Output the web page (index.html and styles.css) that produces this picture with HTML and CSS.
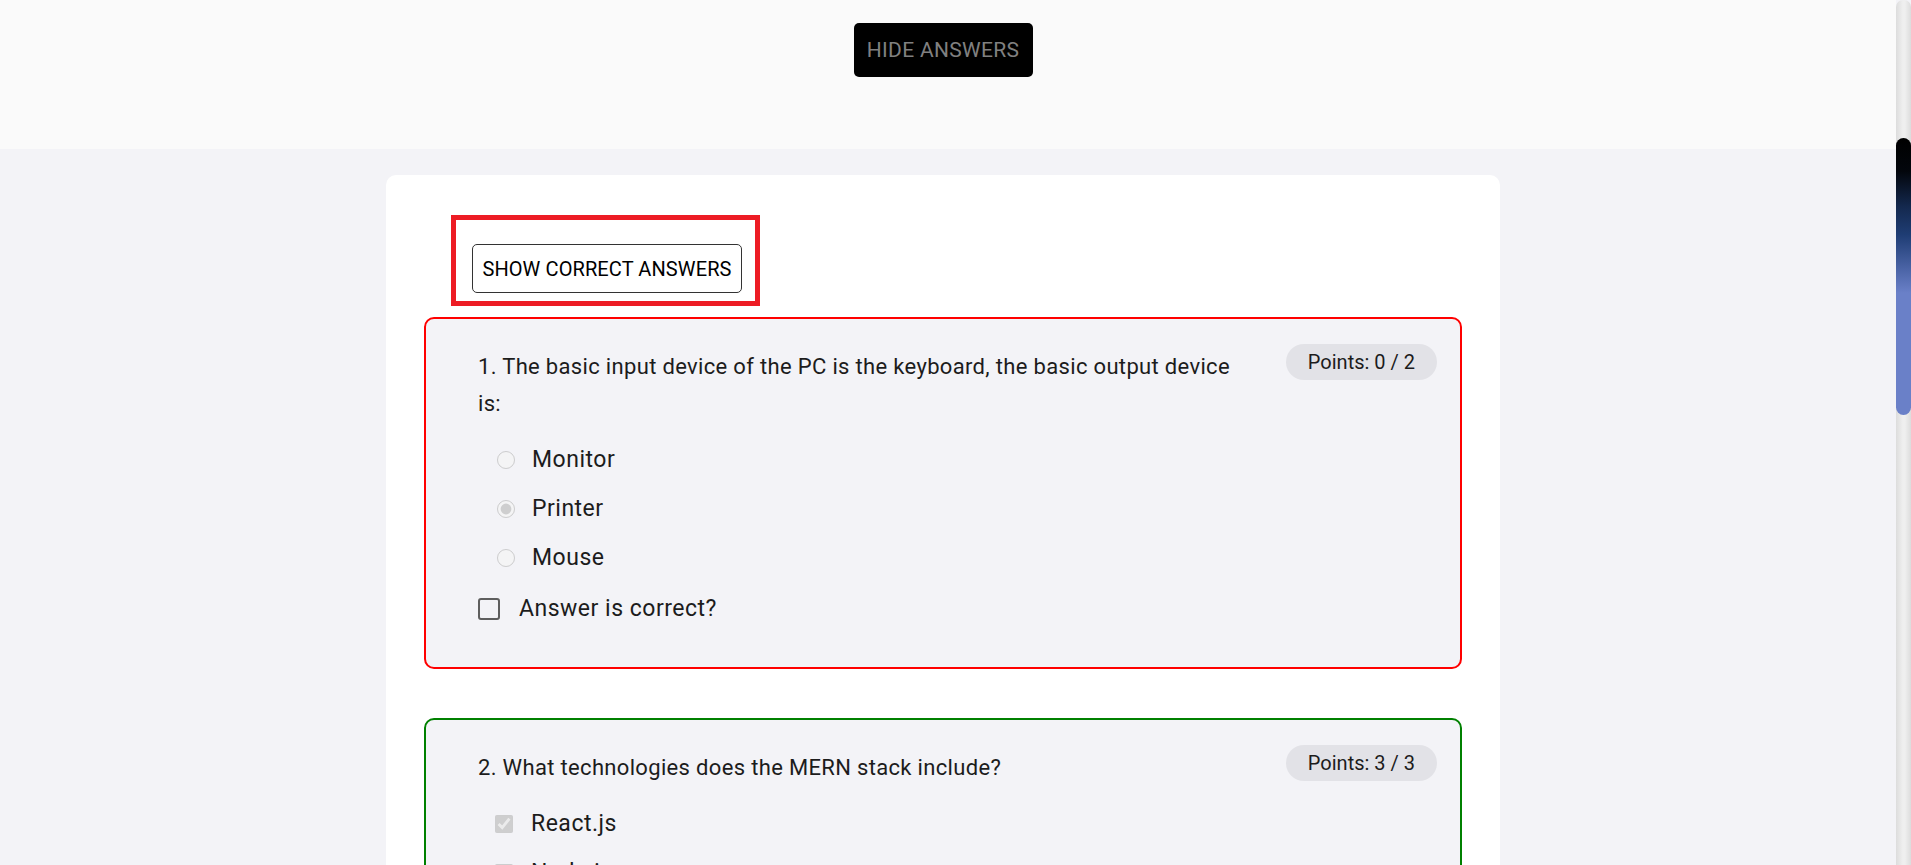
FILE: index.html
```html
<!DOCTYPE html>
<html lang="en">
<head>
<meta charset="utf-8">
<title>Quiz results</title>
<link rel="stylesheet" href="styles.css">
</head>
<body>
<div class="app">
  <div class="page">
    <header class="topbar">
      <button class="hide-btn" type="button">HIDE ANSWERS</button>
    </header>
    <main class="main">
      <section class="sheet">
        <div class="highlight">
          <button class="show-btn" type="button">SHOW CORRECT ANSWERS</button>
        </div>

        <article class="q q-wrong">
          <div class="q-head">
            <p class="q-text">1. The basic input device of the PC is the keyboard, the basic output device is:</p>
            <span class="badge">Points: 0 / 2</span>
          </div>
          <div class="opts">
            <label class="opt"><input type="radio" name="q1" disabled><span>Monitor</span></label>
            <label class="opt"><input type="radio" name="q1" checked disabled><span>Printer</span></label>
            <label class="opt"><input type="radio" name="q1" disabled><span>Mouse</span></label>
          </div>
          <label class="check"><input class="box" type="checkbox"><span>Answer is correct?</span></label>
        </article>

        <article class="q q-right">
          <div class="q-head">
            <p class="q-text">2. What technologies does the MERN stack include?</p>
            <span class="badge">Points: 3 / 3</span>
          </div>
          <div class="opts opts-multi">
            <label class="opt"><input type="checkbox" checked disabled><span>React.js</span></label>
            <label class="opt"><input type="checkbox" checked disabled><span>Node.js</span></label>
            <label class="opt"><input type="checkbox" checked disabled><span>Express.js</span></label>
            <label class="opt"><input type="checkbox" disabled><span>Django</span></label>
          </div>
        </article>
      </section>
    </main>
  </div>
  <div class="scrollbar"><div class="thumb"></div></div>
</div>
</body>
</html>
```

FILE: styles.css
```css
* { box-sizing: border-box; }

html, body {
  margin: 0;
  padding: 0;
}

body {
  font-family: Roboto, "Liberation Sans", Arial, sans-serif;
  color: #1c1c1c;
  background: #f3f3f7;
}

.app {
  display: flex;
  height: 100vh;
  overflow: hidden;
}

.page {
  flex: 1;
  min-width: 0;
  overflow: hidden;
  background: #f3f3f7;
}

.topbar {
  height: 149px;
  background: #fafafa;
  display: flex;
  justify-content: center;
  align-items: flex-start;
  padding: 23px 10px 0 0;
}

.hide-btn {
  width: 179px;
  height: 54px;
  background: #000;
  color: #808080;
  border: 0;
  border-radius: 5px;
  font-family: Roboto, sans-serif;
  font-size: 21px;
  letter-spacing: 0.3px;
  padding: 0;
}

.main {
  display: flex;
  justify-content: center;
  padding: 26px 10px 0 0;
}

.sheet {
  width: 1114px;
  background: #fff;
  border-radius: 10px 10px 0 0;
  padding: 40px 38px 40px;
}

.highlight {
  width: fit-content;
  margin-left: 27px;
  border: 5px solid #ed1c24;
  padding: 24px 13px 8px 16px;
}

.show-btn {
  display: block;
  width: 270px;
  height: 49px;
  background: #fff;
  color: #000;
  border: 1px solid #333;
  border-radius: 5px;
  font-family: Roboto, sans-serif;
  font-size: 20px;
  letter-spacing: 0.1px;
  padding: 0;
}

.q {
  margin-top: 11px;
  border: 2px solid #ff0000;
  border-radius: 10px;
  background: #f3f3f7;
  padding: 25px 23px 34px 52px;
}

.q-right {
  margin-top: 49px;
  border-color: #008000;
}

.q-head {
  display: flex;
  align-items: flex-start;
}

.q-text {
  flex: 1;
  margin: 4px 0 0;
  padding-right: 40px;
  font-size: 22px;
  letter-spacing: 0.33px;
  line-height: 37px;
}

.badge {
  flex: none;
  height: 36px;
  line-height: 36px;
  padding: 0 22px;
  border-radius: 18px;
  background: #e2e2e7;
  font-size: 20px;
  color: #1c1c1c;
}

.opts {
  margin-top: 13px;
  padding-left: 19px;
}

.opts-multi {
  padding-left: 17px;
}

.opt {
  display: flex;
  align-items: center;
  gap: 17px;
  height: 49px;
  font-size: 23px;
  letter-spacing: 0.5px;
}

.opts-multi .opt {
  gap: 18px;
}

.opt input {
  width: 18px;
  height: 18px;
  margin: 0;
}

.check {
  display: flex;
  align-items: center;
  gap: 19px;
  height: 49px;
  margin-top: 2px;
  font-size: 23px;
  letter-spacing: 0.5px;
}

.box {
  appearance: none;
  -webkit-appearance: none;
  width: 22px;
  height: 22px;
  margin: 0;
  border: 2px solid #5e5e5e;
  border-radius: 3px;
  background: transparent;
}

.scrollbar {
  flex: none;
  width: 15px;
  height: 100vh;
  border-radius: 7px 7px 0 0;
  background: linear-gradient(to right, #dcdcdc, #efefef 45%, #efefef 60%, #dcdcdc);
}

.thumb {
  margin-top: 138px;
  height: 277px;
  border-radius: 8px;
  background: linear-gradient(to bottom, #000 0%, #03060c 12%, #14294f 25%, #1f3d74 35%, #4a63a5 47%, #6a80c8 56%, #6a80c8 100%);
}
```
